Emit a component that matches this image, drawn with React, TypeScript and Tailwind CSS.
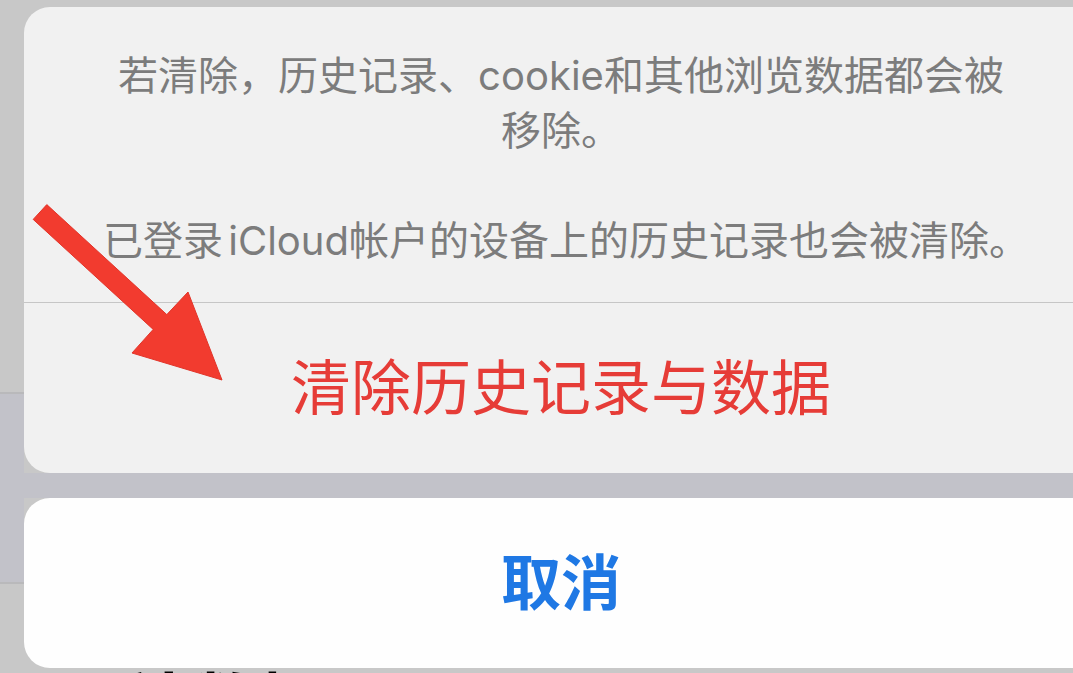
import React from 'react';

const FONT = { fontFamily: 'Inter, "Noto Sans CJK SC", sans-serif' };

function Arrow() {
  return (
    <svg className="absolute left-0 top-0 pointer-events-none" width="260" height="400" viewBox="0 0 260 400">
      <polygon
        points="46.8,204.6 166.8,314.6 188,292 222,380 132,353 153.2,329.4 33.2,219.4"
        fill="#f23b2f"
        stroke="#e2352a"
        strokeWidth="1"
        strokeLinejoin="miter"
      />
    </svg>
  );
}

export default function App() {
  return (
    <div className="relative w-[1073px] h-[673px] overflow-hidden bg-[#c8c8c8] flex" style={FONT}>
      {/* dimmed page behind the sheet, left edge */}
      <div className="w-[24px] shrink-0 flex flex-col">
        <div className="h-[392px] bg-[#c8c8c8]" />
        <div className="h-[2px] bg-[#b9b9bb]" />
        <div className="h-[188px] bg-[#c2c2c9]" />
        <div className="h-[2px] bg-[#b9b9bb]" />
        <div className="flex-1 bg-[#c8c8c8]" />
      </div>

      {/* action sheet */}
      <div className="w-[1074px] shrink-0 flex flex-col">
        <div className="h-[7px] bg-[#c8c8c8]" />

        <div className="h-[466px] rounded-[26px] bg-[#f1f1f1] flex flex-col overflow-hidden">
          <div className="h-[295px] pt-[41px] text-center text-[40px] leading-[55px] text-[#7c7c7c]">
            <p>
              若清除，历史记录、cookie和其他浏览数据都会被
              <br />
              移除。
            </p>
            <p className="mt-[55px] pl-[10px]">
              已登录<span className="tracking-[-6px]"> </span>iCloud帐户的设备上的历史记录也会被清除。
            </p>
          </div>
          <div className="h-[1px] bg-[#c6c6c6]" />
          <div className="flex-1 flex items-center justify-center text-[60px] text-[#e63c37]">
            清除历史记录与数据
          </div>
        </div>

        <div className="h-[25px] bg-[#c2c2c9]" />

        <div className="relative z-10 h-[170px] rounded-[26px] bg-[#fefefe] flex items-center justify-center text-[60px] font-bold text-[#1f78e4]">
          取消
        </div>

        <div className="h-[20px] -mt-[15px] pl-[31px] overflow-hidden">
          <div className="pt-[14px] text-[68px] leading-[76px] font-bold text-black">网站数据</div>
        </div>
      </div>

      <Arrow />
    </div>
  );
}
